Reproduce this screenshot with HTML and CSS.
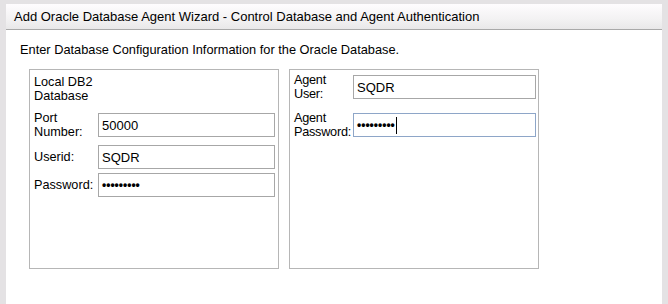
FILE: index.html
```html
<!DOCTYPE html>
<html>
<head>
<meta charset="utf-8">
<title>Add Oracle Database Agent Wizard</title>
<link rel="stylesheet" href="styles.css">
</head>
<body>
<div class="frame">
  <div class="titlebar">Add Oracle Database Agent Wizard - Control Database and Agent Authentication</div>
  <div class="content">
    <div class="intro">Enter Database Configuration Information for the Oracle Database.</div>
    <div class="boxes">
      <div class="box box-left">
        <div class="row row-a"><div class="label lw-left">Local DB2<br>Database</div></div>
        <div class="row row-b">
          <div class="label lw-left">Port<br>Number:</div>
          <div class="field fw-left">50000</div>
        </div>
        <div class="row row-c">
          <div class="label lw-left">Userid:</div>
          <div class="field fw-left">SQDR</div>
        </div>
        <div class="row row-d">
          <div class="label lw-left">Password:</div>
          <div class="field fw-left"><span class="dots">•••••••••</span></div>
        </div>
      </div>
      <div class="box box-right">
        <div class="row row-e">
          <div class="label lw-right">Agent<br>User:</div>
          <div class="field fw-right">SQDR</div>
        </div>
        <div class="row row-f">
          <div class="label lw-right">Agent<br>Password:</div>
          <div class="field fw-right focused"><span class="dots">•••••••••</span><span class="caret"></span></div>
        </div>
      </div>
    </div>
  </div>
</div>
</body>
</html>
```
FILE: styles.css
```css
html, body {
  margin: 0;
  padding: 0;
}
body {
  background: #e4e2e4;
  width: 668px;
  height: 304px;
  overflow: hidden;
  font-family: "Liberation Sans", Arial, sans-serif;
  font-size: 13px;
  color: #000;
}
.frame {
  margin: 4px 6px 0 6px;
  height: 300px;
  background: #fff;
  display: flex;
  flex-direction: column;
}
.titlebar {
  height: 25px;
  border-bottom: 1px solid #a9a9a9;
  background: linear-gradient(#fefcfe, #f3f2f3 60%, #e9e8e9);
  padding-left: 8px;
  display: flex;
  align-items: center;
  flex: none;
}
.content {
  padding: 12px 0 0 14px;
}
.intro {
  font-size: 12.8px;
  line-height: 15px;
  height: 15px;
}
.boxes {
  display: flex;
  gap: 10px;
  margin: 12px 0 0 9px;
}
.box {
  border: 1px solid #b6b6b6;
  display: flex;
  flex-direction: column;
}
.box-left {
  padding: 5px 3px 0 4px;
  width: 241px;
  height: 193px;
}
.box-right {
  padding: 3px 2px 0 4px;
  width: 242px;
  height: 195px;
}
.row {
  display: flex;
  align-items: center;
  flex: none;
}
.row-a { height: 28px; }
.row-b { height: 26px; margin-top: 9px; }
.row-c { height: 24px; margin-top: 7px; }
.row-d { height: 24px; margin-top: 4px; }
.row-e { height: 28px; }
.row-f { height: 28px; margin-top: 10px; }
.label {
  font-size: 12.7px;
  line-height: 14px;
  flex: none;
}
.lw-left { width: 64px; }
.lw-right { width: 59px; letter-spacing: -0.25px; }
.field {
  box-sizing: border-box;
  height: 24px;
  border: 1px solid #a7a7a7;
  background: #fff;
  padding-left: 3px;
  display: flex;
  align-items: center;
  flex: none;
}
.fw-left { width: 177px; }
.fw-right { width: 183px; }
.focused {
  border-color: #8ea6c8;
}
.dots {
  font-size: 12px;
  font-weight: bold;
  letter-spacing: 0;
}
.caret {
  display: inline-block;
  width: 1px;
  height: 17px;
  background: #000;
  margin-left: 1px;
}
```
